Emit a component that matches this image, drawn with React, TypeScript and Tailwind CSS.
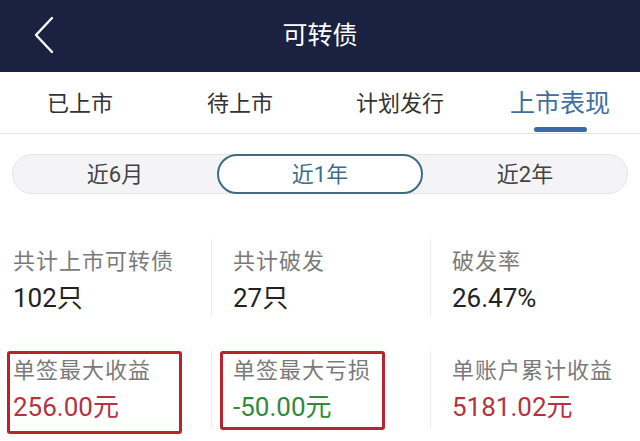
const font = { fontFamily: "Roboto, 'Noto Sans CJK SC', sans-serif" };

const tabs = ["已上市", "待上市", "计划发行", "上市表现"];
const ranges = ["近6月", "近1年", "近2年"];

function Stat({
  label,
  value,
  valueClass,
  top,
  boxed,
  boxClass,
}: {
  label: string;
  value: string;
  valueClass: string;
  top: string;
  boxed?: boolean;
  boxClass?: string;
}) {
  return (
    <div className="relative h-full">
      {boxed && (
        <div
          className={`absolute border-[3px] border-[#b8232e] rounded-[3px] ${boxClass}`}
        />
      )}
      <div className={`${top} text-[22px] leading-[28px] tracking-[1px] text-[#7a7a7a]`}>
        {label}
      </div>
      <div className={`mt-[5px] text-[26px] leading-[34px] ${valueClass}`}>{value}</div>
    </div>
  );
}

export default function App() {
  return (
    <div className="w-[640px] h-[441px] bg-white overflow-hidden" style={font}>
      {/* header */}
      <div className="h-[72px] bg-[#1b2241] flex items-center relative">
        <svg
          className="absolute left-[32px] top-[16px]"
          width="24"
          height="38"
          viewBox="0 0 24 38"
          fill="none"
        >
          <path d="M20 2 L4 19 L20 36" stroke="#ffffff" strokeWidth="2.4" strokeLinecap="round" strokeLinejoin="round" />
        </svg>
        <div className="flex-1 text-center text-white text-[25px]">可转债</div>
      </div>

      {/* tabs */}
      <div className="h-[62px] flex border-b border-[#e4e4e6]">
        {tabs.map((t, i) => (
          <div key={t} className="flex-1 flex flex-col items-center relative">
            <div
              className={
                i === 3
                  ? "mt-[17px] text-[25px] leading-[30px] text-[#3f6f9f]"
                  : "mt-[18px] text-[22px] leading-[28px] text-[#333]"
              }
            >
              {t}
            </div>
            {i === 3 && (
              <div className="absolute bottom-[1px] w-[53px] h-[5px] rounded-full bg-[#3a6aa9]" />
            )}
          </div>
        ))}
      </div>

      {/* range selector */}
      <div className="mx-[12px] mt-[20px] h-[40px] rounded-full bg-[#f4f3f6] border border-[#e6e5e9] flex items-center">
        {ranges.map((r, i) => (
          <div
            key={r}
            className={
              i === 1
                ? "w-[206px] h-[40px] -my-px rounded-full border-2 border-[#3e6c83] bg-white flex items-center justify-center text-[22px] text-[#3d6d8a]"
                : "flex-1 flex items-center justify-center text-[22px] text-[#444]"
            }
          >
            {r}
          </div>
        ))}
      </div>

      {/* stats */}
      <div className="mt-[45px] flex h-[78px]">
        <div className="w-[211px] pl-[13px]">
          <Stat top="pt-[9px]" label="共计上市可转债" value="102只" valueClass="text-[#222]" />
        </div>
        <div className="w-[219px] pl-[21px] border-l border-[#ececec]">
          <Stat top="pt-[9px]" label="共计破发" value="27只" valueClass="text-[#222]" />
        </div>
        <div className="flex-1 pl-[21px] border-l border-[#ececec]">
          <Stat top="pt-[9px]" label="破发率" value="26.47%" valueClass="text-[#222]" />
        </div>
      </div>

      <div className="mt-[34px] flex h-[78px]">
        <div className="w-[211px] pl-[13px]">
          <Stat
            top="pt-[6px]"
            label="单签最大收益"
            value="256.00元"
            valueClass="text-[#b3343e]"
            boxed
            boxClass="left-[-6px] top-0 w-[175px] h-[83px]"
          />
        </div>
        <div className="w-[219px] pl-[21px] border-l border-[#ececec]">
          <Stat
            top="pt-[6px]"
            label="单签最大亏损"
            value="-50.00元"
            valueClass="text-[#2f8a3c]"
            boxed
            boxClass="left-[-13px] top-0 w-[165px] h-[79px]"
          />
        </div>
        <div className="flex-1 pl-[21px] border-l border-[#ececec]">
          <Stat top="pt-[6px]" label="单账户累计收益" value="5181.02元" valueClass="text-[#b3343e]" />
        </div>
      </div>
    </div>
  );
}
